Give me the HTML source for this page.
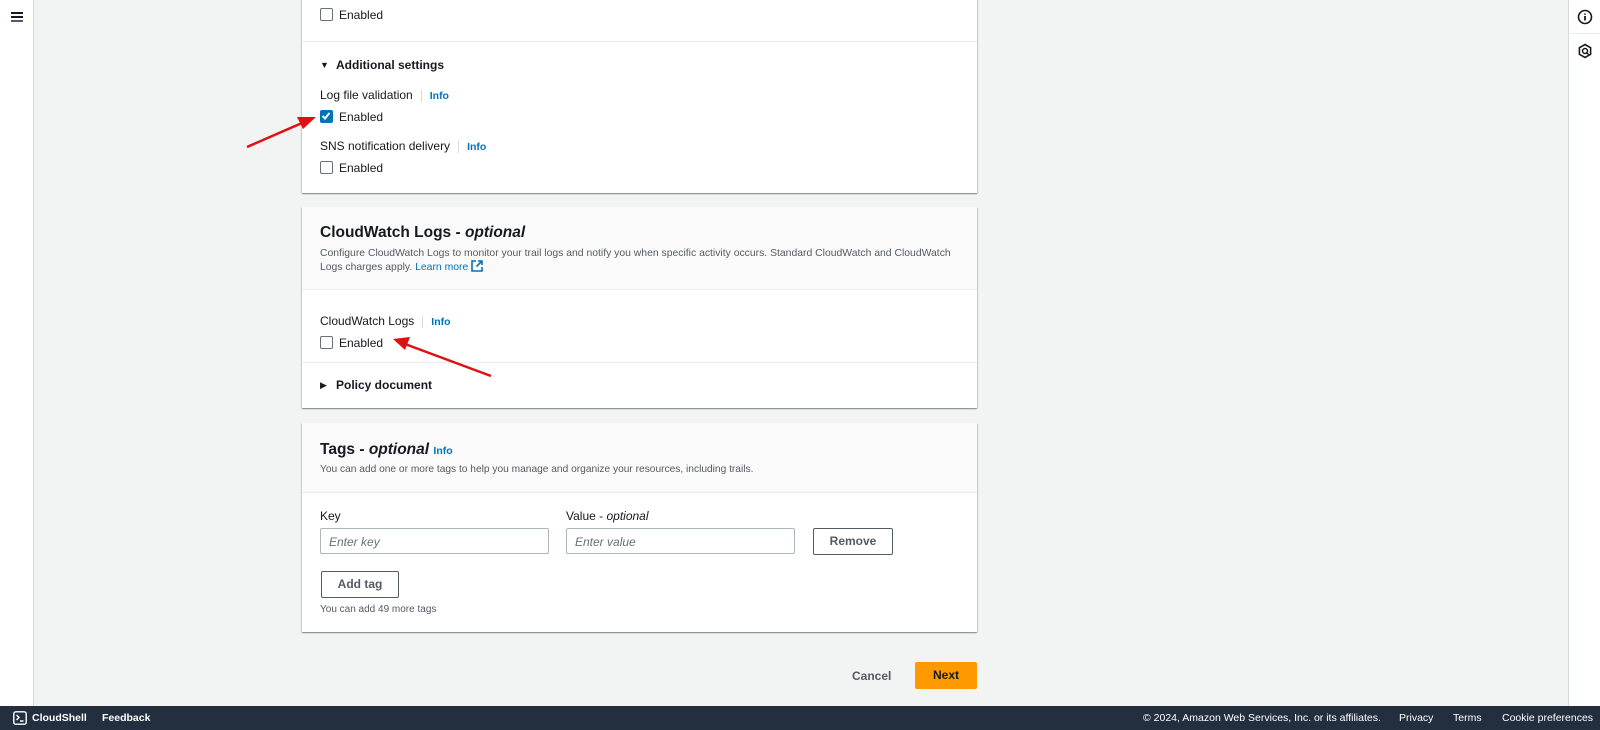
<!DOCTYPE html>
<html><head><meta charset="utf-8"><style>
*{box-sizing:border-box;margin:0;padding:0}
body{width:1600px;height:730px;overflow:hidden;background:#f2f3f3;font-family:"Liberation Sans",sans-serif;color:#16191f;position:relative;font-size:12px}
.a{position:absolute;white-space:nowrap}
.side{left:0;top:0;width:34px;height:706px;background:#fff;border-right:1px solid #d5dbdb}
.rside{left:1568px;top:0;width:32px;height:706px;background:#fff;border-left:1px solid #d5dbdb}
.card{position:absolute;left:302px;width:675px;background:#fff;box-shadow:0 1px 1px 0 rgba(0,28,36,.3),1px 1px 1px 0 rgba(0,28,36,.15),-1px 1px 1px 0 rgba(0,28,36,.15)}
.hdr{position:absolute;left:0;top:0;width:100%;background:#fafafa;border-bottom:1px solid #eaeded}
.cb{position:absolute;width:13px;height:13px;border:1.5px solid #687078;border-radius:2px;background:#fff}
.cbon{background:#0073bb;border-color:#0073bb}
.lbl{color:#16191f}
.info{color:#0073bb;font-weight:bold;font-size:10.5px;border-left:1px solid #d5dbdb;padding-left:8px;margin-left:8px}
.hr{position:absolute;left:0;width:100%;height:1px;background:#eaeded}
.inp{position:absolute;height:26px;border:1px solid #aab7b8;border-radius:2px;background:#fff;font-style:italic;color:#687078;font-size:12px;padding:6px 8px}
.btn{position:absolute;height:27px;border:1px solid #545b64;border-radius:2px;background:#fff;font-weight:bold;color:#545b64;text-align:center;line-height:25px;font-size:12px}
.foot{left:0;top:706px;width:1600px;height:24px;background:#232f3e;color:#fff;font-size:10.5px}
</style></head><body>
<div class="a side"></div>
<div class="a" style="left:11px;top:12px;width:12px;height:2px;background:#16191f"></div>
<div class="a" style="left:11px;top:16px;width:12px;height:2px;background:#16191f"></div>
<div class="a" style="left:11px;top:20px;width:12px;height:2px;background:#545b64"></div>
<div class="a rside"></div>
<div class="a" style="left:1568px;top:33px;width:32px;height:1px;background:#eaeded"></div>
<svg class="a" style="left:1577px;top:9px" width="16" height="16" viewBox="0 0 16 16"><circle cx="8" cy="8" r="6.5" fill="none" stroke="#16191f" stroke-width="1.6"/><path d="M8 7v4.5M8 4.5v1.2" stroke="#16191f" stroke-width="1.8"/></svg>
<svg class="a" style="left:1577px;top:43px" width="16" height="16" viewBox="0 0 16 16"><path d="M8 1.5l5.6 3.2v6.6L8 14.5 2.4 11.3V4.7z" fill="none" stroke="#16191f" stroke-width="1.6"/><circle cx="8" cy="8" r="2.5" fill="none" stroke="#16191f" stroke-width="1.5"/><path d="M9.5 9.5l2 2" stroke="#16191f" stroke-width="1.5"/></svg>

<div class="card" style="top:-5px;height:198px">
  <div class="cb" style="left:18px;top:13px"></div><div class="a lbl" style="left:37px;top:13px">Enabled</div>
  <div class="hr" style="top:46px"></div>
  <div class="a" style="left:18px;top:65px;font-size:9px">&#9660;</div>
  <div class="a" style="left:34px;top:63px;font-weight:bold">Additional settings</div>
  <div class="a" style="left:18px;top:93px">Log file validation<span class="info">Info</span></div>
  <div class="cb cbon" style="left:18px;top:115px"><svg width="10" height="10" viewBox="0 0 10 10" style="position:absolute;left:0;top:0"><path d="M1.5 5l2.5 2.5L8.5 2" stroke="#fff" stroke-width="2" fill="none"/></svg></div>
  <div class="a lbl" style="left:37px;top:115px">Enabled</div>
  <div class="a" style="left:18px;top:144px">SNS notification delivery<span class="info">Info</span></div>
  <div class="cb" style="left:18px;top:166px"></div><div class="a lbl" style="left:37px;top:166px">Enabled</div>
</div>

<div class="card" style="top:207px;height:201px">
  <div class="hdr" style="height:83px"></div>
  <div class="a" style="left:18px;top:17px;font-size:15.5px;font-weight:bold">CloudWatch Logs - <i>optional</i></div>
  <div class="a" style="left:18px;top:40px;font-size:10.4px;color:#545b64;line-height:13px">Configure CloudWatch Logs to monitor your trail logs and notify you when specific activity occurs. Standard CloudWatch and CloudWatch<br>Logs charges apply. <span style="color:#0073bb">Learn more</span> <svg width="12" height="12" viewBox="0 0 12 12" style="vertical-align:-2px"><path d="M5 1H1v10h10V7M7 1h4v4M11 1L5.5 6.5" stroke="#0073bb" stroke-width="1.6" fill="none"/></svg></div>
  <div class="a" style="left:18px;top:107px">CloudWatch Logs<span class="info">Info</span></div>
  <div class="cb" style="left:18px;top:129px"></div><div class="a lbl" style="left:37px;top:129px">Enabled</div>
  <div class="hr" style="top:155px"></div>
  <div class="a" style="left:18px;top:173px;font-size:9px">&#9654;</div>
  <div class="a" style="left:34px;top:171px;font-weight:bold">Policy document</div>
</div>

<div class="card" style="top:423px;height:209px">
  <div class="hdr" style="height:70px"></div>
  <div class="a" style="left:18px;top:18px;font-size:15.5px;font-weight:bold">Tags - <i>optional</i> <span style="color:#0073bb;font-size:10.5px">Info</span></div>
  <div class="a" style="left:18px;top:41px;font-size:10.2px;color:#545b64">You can add one or more tags to help you manage and organize your resources, including trails.</div>
  <div class="a" style="left:18px;top:86px">Key</div>
  <div class="a" style="left:264px;top:86px">Value - <i>optional</i></div>
  <div class="inp" style="left:18px;top:105px;width:229px">Enter key</div>
  <div class="inp" style="left:264px;top:105px;width:229px">Enter value</div>
  <div class="btn" style="left:511px;top:105px;width:80px">Remove</div>
  <div class="btn" style="left:19px;top:148px;width:78px">Add tag</div>
  <div class="a" style="left:18px;top:181px;font-size:10px;color:#545b64">You can add 49 more tags</div>
</div>

<div class="a" style="left:852px;top:669px;font-weight:bold;color:#545b64">Cancel</div>
<div class="a" style="left:915px;top:662px;width:62px;height:27px;background:#ff9900;border-radius:2px;text-align:center;line-height:27px;font-weight:bold;color:#16191f">Next</div>

<svg class="a" style="left:0;top:0" width="1600" height="700" viewBox="0 0 1600 700">
<path d="M247 147L302 123" stroke="#e01010" stroke-width="2.5"/><path d="M316 117L297 117L303 129z" fill="#e01010"/>
<path d="M491 376L405 344" stroke="#e01010" stroke-width="2.5"/><path d="M393 339L410 337L405 350z" fill="#e01010"/>
</svg>

<div class="a foot">
  <svg class="a" style="left:13px;top:5px" width="14" height="14" viewBox="0 0 14 14"><rect x="0.8" y="0.8" width="12.4" height="12.4" rx="2" fill="none" stroke="#fff" stroke-width="1.4"/><path d="M3.5 4l2.5 2.5L3.5 9M7 10h3.5" stroke="#fff" stroke-width="1.4" fill="none"/></svg>
  <div class="a" style="left:32px;top:6px;font-weight:bold">CloudShell</div>
  <div class="a" style="left:102px;top:6px;font-weight:bold">Feedback</div>
  <div class="a" style="left:1143px;top:6px">© 2024, Amazon Web Services, Inc. or its affiliates.</div>
  <div class="a" style="left:1399px;top:6px">Privacy</div>
  <div class="a" style="left:1453px;top:6px">Terms</div>
  <div class="a" style="left:1502px;top:6px">Cookie preferences</div>
</div>
</body></html>
